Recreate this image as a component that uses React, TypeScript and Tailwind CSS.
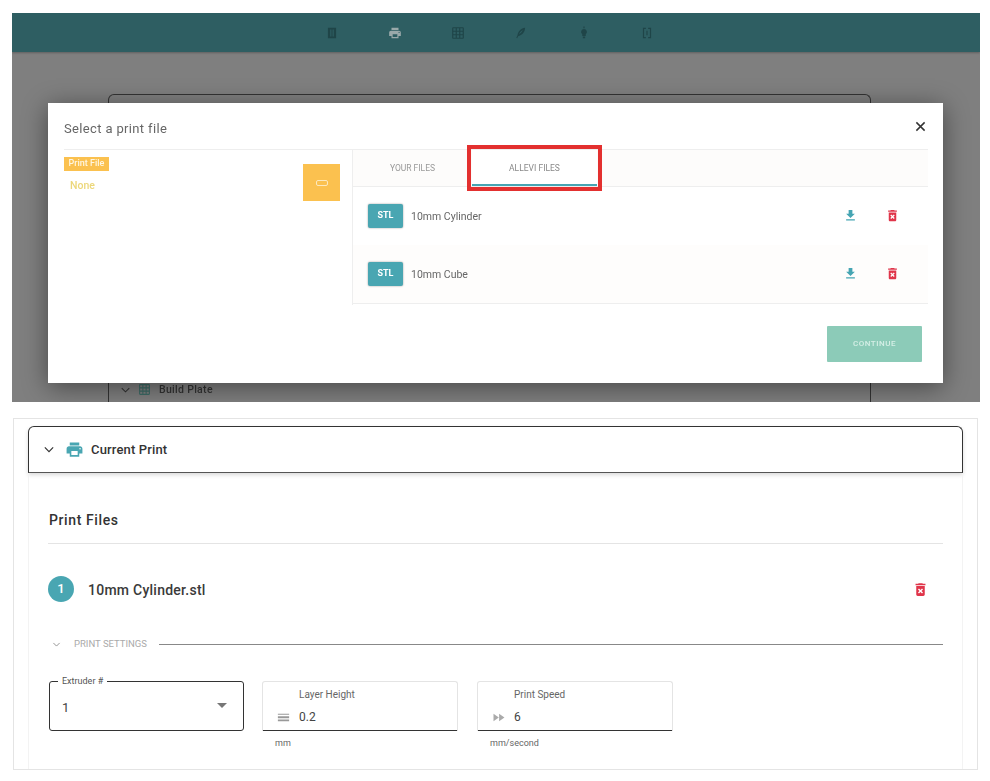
const FONT = "font-['Roboto','Liberation_Sans',sans-serif]"

const PRINT = 'M19 8H5c-1.66 0-3 1.34-3 3v6h4v4h12v-4h4v-6c0-1.66-1.34-3-3-3zm-3 11H8v-5h8v5zm3-7c-.55 0-1-.45-1-1s.45-1 1-1 1 .45 1 1-.45 1-1 1zm-1-9H6v4h12V3z'
const TRASH = 'M6 19c0 1.1.9 2 2 2h8c1.1 0 2-.9 2-2V7H6v12zm2.46-7.12l1.41-1.41L12 12.59l2.12-2.12 1.41 1.41L13.41 14l2.12 2.12-1.41 1.41L12 15.41l-2.12 2.12-1.41-1.41L10.59 14l-2.13-2.12zM15.5 4l-1-1h-5l-1 1H5v2h14V4z'
const DOWNLOAD = 'M19 9h-4V3H9v6H5l7 7 7-7zM5 18v2h14v-2H5z'
const GRID = 'M20 2H4c-1.1 0-2 .9-2 2v16c0 1.1.9 2 2 2h16c1.1 0 2-.9 2-2V4c0-1.1-.9-2-2-2zM8 20H4v-4h4v4zm0-6H4v-4h4v4zm0-6H4V4h4v4zm6 12h-4v-4h4v4zm0-6h-4v-4h4v4zm0-6h-4V4h4v4zm6 12h-4v-4h4v4zm0-6h-4v-4h4v4zm0-6h-4V4h4v4z'
const FORWARD = 'M4 18l8.5-6L4 6v12zm9-12v12l8.5-6L13 6z'
const LINES = 'M3 6h18v1.5H3zM3 10h18v3H3zM3 15h18v3H3z'
const LEAF = 'M19 3c-7 1-12 6-13 13l-2 4 1.500.8L7 17.500C14 16 19 10 19 3zM9 14c1-3 3-5 6-7-1 3-3 5-6 7z'
const BULB = 'M12 5a5 5 0 0 0-3 9v3h6v-3a5 5 0 0 0-3-9zM11 1h2v3h-2zM10 18h4v3h-4z'
const BOOK = 'M5 3h14v18H5zM9 6v12h2V6zm4 0v12h2V6z'
const BRACKETS = 'M5 3h5v2H7v14h3v2H5zM14 3h5v18h-5v-2h3V5h-3zM11 8h2v8h-2z'

function Icon({ d, className }: { d: string; className: string }) {
  return (
    <svg viewBox="0 0 24 24" fill="currentColor" className={className}>
      <path d={d} />
    </svg>
  )
}

function Chevron({ className }: { className: string }) {
  return (
    <svg viewBox="0 0 12 8" fill="none" stroke="currentColor" strokeWidth="1.4" className={className}>
      <path d="M1 1.5l5 5 5-5" />
    </svg>
  )
}

function FileRow({ name, shaded }: { name: string; shaded?: boolean }) {
  return (
    <div className={`flex h-[58px] items-center pl-[15px] ${shaded ? 'bg-[#fefdfc]' : 'bg-white'}`}>
      <div className="flex h-6 w-[35px] items-center justify-center rounded-[2px] bg-[#49a6b2] text-[9px] font-bold text-white shadow-[0_0_2px_rgba(0,0,0,0.4)]">
        STL
      </div>
      <span className="mt-px ml-2 text-[10.5px] text-[#666]">{name}</span>
      <Icon d={DOWNLOAD} className="-mt-px ml-auto h-[15px] w-[15px] text-[#45a5b3]" />
      <Icon d={TRASH} className="-mt-px mr-[28px] ml-[27px] h-[15px] w-[15px] text-[#e0354a]" />
    </div>
  )
}

function Modal() {
  return (
    <div className="absolute top-[90px] left-[36px] flex h-[280px] w-[895px] flex-col bg-white shadow-[0_4px_24px_rgba(0,0,0,0.45)]">
      <div className="flex h-[46px] shrink-0 items-center justify-between pt-[5px] pr-[17px] pl-4">
        <span className="text-[13px] tracking-[0.35px] text-[#666]">Select a print file</span>
        <svg viewBox="0 0 12 12" stroke="#333" strokeWidth="1.6" className="-mt-[5px] h-[11px] w-[11px]">
          <path d="M1.5 1.5l9 9M10.5 1.5l-9 9" />
        </svg>
      </div>
      <div className="mr-[15px] ml-4 flex border-t border-[#eeeeee]">
        <div className="relative h-[155px] w-[288px] shrink-0">
          <span className="absolute top-[7px] left-0 flex h-[14px] w-[45px] items-center justify-center bg-[#fbc14f] text-[9px] font-medium text-[#fff6e0]">
            Print File
          </span>
          <span className="absolute top-[28px] left-[6px] text-[10.5px] font-medium text-[#ecd77a]">None</span>
          <div className="absolute top-[14px] right-[12px] flex h-[37px] w-[37px] items-center justify-center bg-[#fbc14f]">
            <div className="h-[6px] w-[12px] rounded-[2px] border border-[#fde9bd]" />
          </div>
        </div>
        <div className="flex-1 border-l border-[#eeeeee]">
          <div className="flex h-[37px] border-b border-[#eeeeee] bg-[#fdfcfb]">
            <span className="flex w-[119px] items-center justify-center text-[8.5px] text-[#999]">YOUR FILES</span>
            <div className="relative flex w-[125px] items-center justify-center border-b-2 border-[#45a5b3] bg-white pt-[3px] text-[8.5px] text-[#888]">
              ALLEVI FILES
              <div className="absolute -top-[5px] -right-[5px] -bottom-[7px] -left-[5px] border-[4px] border-[#e3302f]" />
            </div>
          </div>
          <div className="border-b border-[#eeeeee]">
            <FileRow name="10mm Cylinder" />
            <FileRow name="10mm Cube" shaded />
          </div>
        </div>
      </div>
      <div className="mt-[21px] mr-[21px] flex h-9 w-[95px] items-center justify-center self-end rounded-[1px] bg-[#8ccbb8] text-[8px] font-medium tracking-[0.5px] text-[#d5efe6]">
        CONTINUE
      </div>
    </div>
  )
}

function FieldBox({ icon, label, value, unit, iconClass }: { icon: string; label: string; value: string; unit: string; iconClass: string }) {
  return (
    <div className="w-[196px]">
      <div className="flex h-[50px] flex-col rounded-t-[3px] border border-b-0 border-[#e4e4e4] shadow-[inset_0_-1px_0_#333]">
        <span className="mt-[7px] ml-[36px] text-[10px] leading-3 text-[#666]">{label}</span>
        <div className="mt-[8px] flex items-center pl-[13px]">
          <Icon d={icon} className={iconClass} />
          <span className="ml-[8px] text-[12px] leading-4 text-[#444]">{value}</span>
        </div>
      </div>
      <div className="mt-[6px] pl-[13px] text-[9px] text-[#666]">{unit}</div>
    </div>
  )
}

export default function App() {
  return (
    <main className={`h-[781px] w-[990px] overflow-hidden bg-white pt-[13px] ${FONT}`}>
      {/* Top screenshot, dialog open */}
      <section className="relative ml-3 h-[389px] w-[968px] overflow-hidden bg-[#7f7f7f] blur-[0.35px]">
        <div className="flex h-[39px] items-center justify-center gap-[49px] bg-[#2e5e62] pr-[14px] text-[#1f4548] shadow-[0_1px_2px_rgba(0,0,0,0.25)]">
          <Icon d={BOOK} className="h-[14px] w-[14px]" />
          <Icon d={PRINT} className="h-[14px] w-[14px] text-[#9aa9aa]" />
          <Icon d={GRID} className="h-[14px] w-[14px]" />
          <Icon d={LEAF} className="h-[14px] w-[14px]" />
          <Icon d={BULB} className="h-[14px] w-[14px]" />
          <Icon d={BRACKETS} className="h-[14px] w-[14px]" />
        </div>
        <div className="mt-[42px] ml-[96px] h-[320px] w-[763px] rounded-t-[6px] border border-b-0 border-[#333]">
          <div className="flex h-[301px] items-end gap-[8px] pl-[12px] text-[#333]">
            <Chevron className="mb-[3px] h-[6px] w-[9px]" />
            <Icon d={GRID} className="h-[13px] w-[13px] text-[#3d6b66]" />
            <span className="text-[10.5px] leading-[13px] font-medium tracking-[0.3px]">Build Plate</span>
          </div>
        </div>
        <Modal />
      </section>

      {/* Bottom screenshot, current print */}
      <section className="mt-4 ml-[13px] h-[352px] w-[965px] overflow-hidden border border-[#e4e4e4] bg-white px-[14px] pt-[7px]">
        <div className="flex h-[47px] items-center rounded-t-[6px] border border-[#333] border-b-[#555] pl-[15px] shadow-[0_2px_4px_rgba(0,0,0,0.15)]">
          <Chevron className="h-[7px] w-[10px] text-[#333]" />
          <Icon d={PRINT} className="ml-[11px] h-[19px] w-[19px] text-[#49a6b2]" />
          <span className="ml-[7px] text-[13px] font-medium tracking-[0.15px] text-[#333]">Current Print</span>
        </div>
        <div className="h-[300px] border-x border-[#f3f3f3] px-[19px] pt-[39px]">
          <div className="border-b border-[#e4e4e4] pb-[14px] pl-px text-[14px] leading-[17px] font-medium tracking-[0.6px] text-[#333]">
            Print Files
          </div>
          <div className="mt-[32px] flex items-center">
            <div className="flex h-[26px] w-[26px] items-center justify-center rounded-full bg-[#49a6b2] text-[13px] font-medium text-white">
              1
            </div>
            <span className="mt-[3px] ml-[14px] text-[14px] font-medium tracking-[0.25px] text-[#3a3a3a]">10mm Cylinder.stl</span>
            <Icon d={TRASH} className="mr-[14px] ml-auto h-[17px] w-[17px] text-[#e0354a]" />
          </div>
          <div className="mt-[35px] flex items-center">
            <Chevron className="ml-[4px] h-[5px] w-[9px] text-[#888]" />
            <span className="ml-[13px] text-[9.5px] text-[#aaa]">PRINT SETTINGS</span>
            <div className="ml-[12px] h-px flex-1 bg-[#888]" />
          </div>
          <div className="mt-[30px] flex gap-[19px]">
            <div className="relative ml-px flex h-[50px] w-[195px] items-center justify-between rounded-[3px] border border-[#333] pr-[16px] pl-[12px]">
              <span className="absolute -top-[7px] left-[8px] bg-white px-[4px] text-[9px] leading-3 text-[#555]">Extruder #</span>
              <span className="mt-[3px] text-[13px] text-[#444]">1</span>
              <div className="-mt-px h-0 w-0 border-x-[5px] border-t-[5px] border-x-transparent border-t-[#777]" />
            </div>
            <div className="-ml-px flex gap-[19px]">
              <FieldBox icon={LINES} label="Layer Height" value="0.2" unit="mm" iconClass="h-[15px] w-[15px] text-[#999]" />
              <FieldBox icon={FORWARD} label="Print Speed" value="6" unit="mm/second" iconClass="h-[15px] w-[15px] text-[#aaa]" />
            </div>
          </div>
        </div>
      </section>
    </main>
  )
}
